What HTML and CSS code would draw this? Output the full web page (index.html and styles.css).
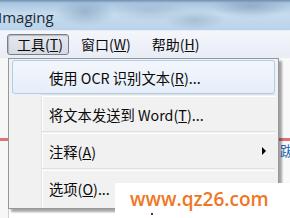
FILE: index.html
```html
<!DOCTYPE html>
<html lang="zh">
<head>
<meta charset="utf-8">
<link rel="stylesheet" href="styles.css">
</head>
<body>
<div class="win">
  <div class="titlebar"><span class="title">Imaging</span></div>
  <div class="menubar">
    <span class="mitem pressed">工具(<u>T</u>)</span>
    <span class="mitem">窗口(<u>W</u>)</span>
    <span class="mitem">帮助(<u>H</u>)</span>
  </div>
  <div class="content">
    <div class="bgleft"><div class="redline"></div></div>
    <div class="bgright"><div class="redline"></div><span class="bluechar">跋</span></div>
    <div class="dropdown">
      <div class="row hl"><span class="label">使用 OCR 识别文本(<u>R</u>)...</span></div>
      <div class="sep"></div>
      <div class="row"><span class="label">将文本发送到 Word(<u>T</u>)...</span></div>
      <div class="sep"></div>
      <div class="row"><span class="label">注释(<u>A</u>)</span><span class="arrow"></span></div>
      <div class="sep"></div>
      <div class="row"><span class="label">选项(<u>O</u>)...</span></div>
    </div>
    <div class="watermark">www.qz26.com<span class="dot"></span></div>
  </div>
</div>
</body>
</html>
```
FILE: styles.css
```css
* { box-sizing: border-box; }
html, body { margin: 0; padding: 0; }
body {
  width: 290px; height: 218px; overflow: hidden;
  font-family: "Noto Sans CJK SC", "Noto Sans", sans-serif;
  background: #fff;
}
.win { width: 290px; height: 218px; display: flex; flex-direction: column; }
.titlebar {
  height: 30px; flex: none;
  background:
    radial-gradient(ellipse 30px 14px at 85px 12px, rgba(120,150,180,0.55), transparent),
    radial-gradient(ellipse 40px 12px at 150px 10px, rgba(150,175,200,0.5), transparent),
    radial-gradient(ellipse 30px 10px at 195px 20px, rgba(140,165,190,0.5), transparent),
    radial-gradient(ellipse 40px 12px at 250px 6px, rgba(120,140,170,0.5), transparent),
    linear-gradient(#6d8db0 0px, #a9c6e0 3px, #c6dcee 14px, #b9d3ea 30px);
  display: flex; align-items: center;
}
.title {
  font-family: "Open Sans", "Noto Sans", sans-serif;
  font-size: 15px; color: #1d2a36; margin-left: -2px; margin-top: 3px;
}
.menubar {
  height: 28px; flex: none;
  background: linear-gradient(#f4f6fb, #e8ecf6);
  border-top: 1px solid #e6ecf4;
  display: flex; align-items: center; padding-left: 7px;
  font-size: 14px; color: #0a0a0a;
}
.mitem { height: 21px; line-height: 19px; border: 1px solid transparent; white-space: nowrap; }
.mitem.pressed {
  border: 1px solid #7a7f87; border-radius: 3px;
  background: linear-gradient(#e4e7ee, #d7dbe3);
  box-shadow: inset 1px 1px 1px rgba(0,0,0,0.2);
  width: 62px; padding-left: 9px;
}
.mitem:nth-child(2) { margin-left: 11px; }
.mitem:nth-child(3) { margin-left: 19px; }
u { text-decoration: underline; text-underline-offset: 1px; }
.content { position: relative; flex: 1; background: #fff; }
.bgleft {
  position: absolute; left: 0; top: 0; width: 9px; height: 160px;
  background: #f7f7f7; border-right: 1px solid #cfcfcf;
}
.bgright {
  position: absolute; right: 0; top: 0; width: 14px; height: 160px;
  background: #f9f9f9; border-left: 1px solid #c8c8c8;
}
.redline { position: absolute; left: 0; right: 0; top: 80px; height: 3px; background: #d23a3a; opacity: 0.7; }
.bluechar { position: absolute; left: 3px; top: 82px; color: #2d6bb8; font-size: 14px; }
.dropdown {
  position: absolute; left: 8px; top: 0; width: 271px;
  border: 1px solid #979797;
  box-shadow: 3px 3px 2px rgba(0,0,0,0.35);
  padding: 1px 3px 3px 3px;
  display: flex; flex-direction: column;
  background-image: linear-gradient(90deg, transparent 32px, #e2e3e3 32px, #e2e3e3 33px, #fff 33px, #fff 34px, transparent 34px);
  background-color: #f1f1f1;
}
.row {
  height: 34px; flex: none; display: flex; align-items: center;
  padding-left: 36px; font-size: 14.3px; color: #0a0a0a; position: relative;
  border: 1px solid transparent; border-radius: 3px;
}
.row.hl {
  border-color: #aeccee;
  background: linear-gradient(#f3f7fc, #e5eef9);
}
.sep { height: 3px; flex: none; margin-left: 30px; border-top: 1px solid #e0e0e0; border-bottom: 1px solid #fff; }
.arrow {
  position: absolute; right: 8px; top: 12px; width: 0; height: 0;
  border-left: 4px solid #000; border-top: 4px solid transparent; border-bottom: 4px solid transparent;
}
.watermark {
  position: absolute; left: 115px; top: 125px; width: 175px; height: 35px;
  background: #fff; color: #f07626;
  font-family: "Open Sans", "Noto Sans", sans-serif; font-weight: 600; font-size: 19px;
  padding-left: 15px; line-height: 33px;
}
.dot { position: absolute; left: 36px; top: 30px; width: 2px; height: 2px; background: #6b2a10; }
```
